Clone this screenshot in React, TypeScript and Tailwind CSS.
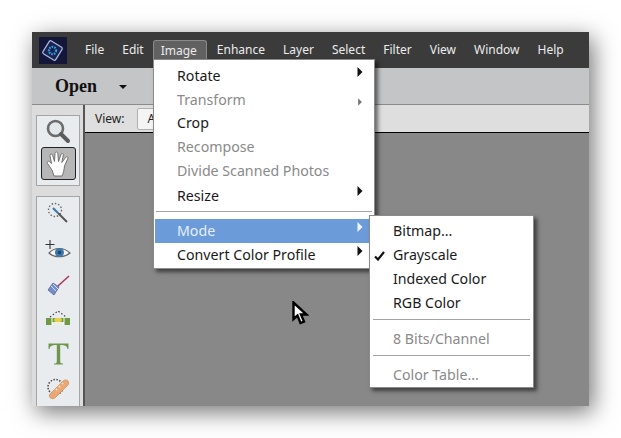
import clsx from "clsx";
import React from "react";

const menuBar = ["File", "Edit", "Image", "Enhance", "Layer", "Select", "Filter", "View", "Window", "Help"];

const Arrow = ({ className }: { className: string }) => (
  <svg width="6" height="10" viewBox="0 0 6 10" className={clsx("absolute", className)}>
    <path d="M0.5 0 L5.5 5 L0.5 10 Z" fill="currentColor" />
  </svg>
);

const MenuRow = ({
  label,
  disabled,
  active,
  arrow,
  small,
  checked,
  className,
}: {
  label: string;
  disabled?: boolean;
  active?: boolean;
  arrow?: boolean;
  small?: boolean;
  checked?: boolean;
  className: string;
}) => (
  <div
    className={clsx(
      "relative flex items-center text-[14.2px] leading-none",
      className,
      active ? "bg-[#6c9bd9] text-[#e6eefa]" : disabled ? "text-[#8a8a8a]" : "text-[#1a1a1a]",
    )}
  >
    {checked && (
      <svg width="11" height="10" viewBox="0 0 11 10" className="absolute left-[4px] top-[8px]">
        <path d="M1 5.5 L4 8.5 L10 1" fill="none" stroke="#111" strokeWidth="2.2" />
      </svg>
    )}
    {label}
    {arrow && (
      <Arrow
        className={clsx(
          "right-[11px]",
          small ? "top-[9px] scale-75 text-[#777]" : "top-[3px] text-[#111]",
          active && "text-[#f2f6fc]",
        )}
      />
    )}
  </div>
);

const Divider = ({ className }: { className: string }) => <div className={clsx("h-px bg-[#a3a3a3]", className)} />;

const Logo = () => (
  <svg width="28" height="27" viewBox="0 0 28 27">
    <rect width="28" height="27" fill="#14173a" />
    <rect x="6" y="6" width="15" height="15" rx="1.5" transform="rotate(32 13.500 13.500)" fill="#1b2350" stroke="#a9bde2" strokeWidth="1.200" />
    <circle cx="13.500" cy="13.500" r="3.600" fill="none" stroke="#2f9fe0" strokeWidth="2.200" strokeDasharray="1.600 1" />
  </svg>
);

const ZoomIcon = () => (
  <svg width="26" height="26" viewBox="0 0 26 26">
    <circle cx="10.500" cy="10.500" r="7.500" fill="#e4e8ea" stroke="#6c6c6c" strokeWidth="2.600" />
    <path d="M16 16 L23 23" stroke="#5c5c5c" strokeWidth="4" strokeLinecap="round" />
  </svg>
);

const HandIcon = () => (
  <svg width="24" height="26" viewBox="0 0 24 26">
    <path
      d="M6 19 L1.500 12.500 C0.500 10.500 2.500 9.500 4 11 L5.500 12.500 L4 4.500 C3.800 2.500 6 2.200 6.500 4 L8.500 10.500 L9 2.500 C9 0.500 11.500 0.500 11.800 2.500 L12.500 10.500 L15 3.500 C15.500 1.800 17.700 2.300 17.300 4 L15.800 11.500 L19.500 6.500 C20.800 5 22.500 6 21.700 7.800 L18.500 15 C18 19 17.500 22 16 25 L8 25 Z"
      fill="#fff"
      stroke="#666"
      strokeWidth="0.900"
      strokeLinejoin="round"
    />
  </svg>
);

const WandIcon = () => (
  <svg width="22" height="22" viewBox="0 0 22 22">
    <circle cx="8" cy="8" r="6.500" fill="none" stroke="#666" strokeWidth="1.400" strokeDasharray="1.500 1.800" />
    <path d="M6 6 L11 11" stroke="#3a77b8" strokeWidth="2.200" />
    <path d="M11 11 L20 20" stroke="#555" strokeWidth="2" />
  </svg>
);

const EyeIcon = () => (
  <svg width="26" height="22" viewBox="0 0 26 22" className="mt-px">
    <path d="M5 1 V10 M0.500 5.500 H9.500" stroke="#333" strokeWidth="1.100" />
    <path d="M4 14 C9 8 19 8 25 14 C19 19 9 19 4 14 Z" fill="#f4f6f8" stroke="#666" strokeWidth="1.200" />
    <circle cx="14.500" cy="13.500" r="4.500" fill="#3f78ad" />
    <circle cx="14.500" cy="13.500" r="1.800" fill="#1e456e" />
  </svg>
);

const BrushIcon = () => (
  <svg width="24" height="24" viewBox="0 0 24 24" className="-mt-px">
    <path d="M12 12 L23 2" stroke="#a83a5a" strokeWidth="1.600" />
    <path d="M7 9 L13 13 L8 21 L2 16 Z" fill="#6f8fd0" stroke="#6a5a88" strokeWidth="0.800" />
    <path d="M5 12 L10 17 M7 10 L12 15" stroke="#d5e0f4" strokeWidth="1" />
  </svg>
);

const LevelIcon = () => (
  <svg width="24" height="16" viewBox="0 0 24 16" className="-mt-[2px]">
    <path d="M4 7 L12 1 L20 7" fill="none" stroke="#333" strokeWidth="1.100" strokeDasharray="1.500 2" />
    <rect x="0" y="8" width="24" height="7" fill="#6f9a43" />
    <rect x="6" y="12" width="12" height="3" fill="#eef0df" />
    <rect x="8" y="8" width="8" height="4" rx="2" fill="#e3d24a" />
    <path d="M6 8 V15 M18 8 V15" stroke="#ffffff" strokeWidth="1" />
  </svg>
);

const TextIcon = () => (
  <svg width="21" height="22" viewBox="0 0 21 22" className="mt-[3px]">
    <path
      d="M0.500 0.500 H20.500 V6 H19.500 C19 3 17.500 2 12.200 2 V18.500 C12.200 20 13 20.500 15 20.500 V21.500 H6 V20.500 C8 20.500 8.800 20 8.800 18.500 V2 C3.500 2 2 3 1.500 6 H0.500 Z"
      fill="#6f9550"
    />
  </svg>
);

const BandageIcon = () => (
  <svg width="24" height="24" viewBox="0 0 24 24" className="-mt-[3px]">
    <circle cx="9.500" cy="11" r="7.500" fill="none" stroke="#4a4a4a" strokeWidth="1.500" strokeDasharray="1.500 1.500" />
    <path d="M4 18 L17 5 C19 3.500 21 3.500 22 5 C23 6.500 23 8 21.500 9.500 L9.500 21.500 C8 23 6 23 4.500 22 C3 21 3 19.500 4 18 Z" fill="#e9a773" stroke="#c9824e" strokeWidth="0.600" />
    <path d="M10 13 L12 15 M13 10 L15 12 M16 7 L18 9" stroke="#fff1e0" strokeWidth="1.400" strokeDasharray="1.400 1.200" />
  </svg>
);

const Cursor = () => (
  <svg width="17" height="25" viewBox="0 0 17 25" className="absolute left-[260px] top-[269px]">
    <path d="M1.500 1.500 L1.500 18 L5.500 14.500 L8.500 22 L12 20.500 L9 13.500 L14.500 13.500 Z" fill="#fff" stroke="#000" strokeWidth="2.400" strokeLinejoin="miter" />
  </svg>
);

export default function App() {
  return (
    <div className="w-[621px] h-[438px] bg-white pt-8 pl-8 font-['Noto_Sans',sans-serif]">
      <div className="relative w-[557px] h-[374px] flex flex-col bg-[#888888] shadow-[4px_6px_22px_rgba(0,0,0,0.55)]">
        <div className="h-[36px] bg-[#3b3b3b] flex items-center pl-[7px]">
          <Logo />
          <div className="flex items-center ml-[10px] gap-[2px] h-[20px]">
            {menuBar.map((m) => (
              <div
                key={m}
                className={clsx(
                  "h-full px-2 flex items-center text-[12px] text-[#ececec]",
                  m === "Image" && "bg-[#616161] rounded-t-[3px] border border-b-0 border-[#8a8a8a] -ml-px pl-[7px] pr-[9px]",
                )}
              >
                {m}
              </div>
            ))}
          </div>
        </div>

        <div className="h-[36px] bg-[#c4c5c6] border-b border-[#8b8b8b] flex items-center pl-[23px] box-content">
          <span className="font-['Liberation_Serif',serif] font-bold text-[18px] text-[#111]">Open</span>
          <span className="ml-[22px] mt-[1px] w-0 h-0 border-x-[4px] border-x-transparent border-t-[4px] border-t-[#111]" />
        </div>

        <div className="flex-1 flex min-h-0">
          <div className="w-[53px] bg-[#dcdcdc] border-r-2 border-[#555] pl-[4px] pr-[3px] pt-[10px] flex flex-col gap-[10px]">
            <div className="h-[71px] bg-[#e8ecee] border border-[#a5a5a5] flex flex-col items-center pt-[2px] gap-[3px]">
              <ZoomIcon />
              <div className="w-[35px] h-[33px] bg-[#b6b6b6] border border-[#222] rounded-[3px] flex items-center justify-center">
                <HandIcon />
              </div>
            </div>
            <div className="flex-1 bg-[#e8ecee] border-x border-t border-[#a5a5a5] flex flex-col items-center pt-[5px] gap-[14px]">
              <WandIcon />
              <EyeIcon />
              <BrushIcon />
              <LevelIcon />
              <TextIcon />
              <BandageIcon />
            </div>
          </div>

          <div className="flex-1 flex flex-col">
            <div className="h-[28px] bg-[#dedede] border-b border-black flex items-center pl-[10px]">
              <span className="text-[12px] text-[#222]">View:</span>
              <div className="ml-[13px] w-[40px] h-[22px] bg-[#f4f4f4] border border-[#b0b0b0] rounded-[2px] pl-[9px] text-[12px] text-[#222] leading-[20px]">
                A
              </div>
            </div>
            <div className="flex-1 bg-[#888888]" />
          </div>
        </div>

        <div className="absolute left-[121px] top-[27px] w-[222px] h-[210px] bg-white border border-[#8b8b8b] shadow-[3px_3px_4px_rgba(0,0,0,0.55)] pt-[4px] flex flex-col">
          <MenuRow label="Rotate" arrow className="h-[24px] pl-[23px]" />
          <MenuRow label="Transform" disabled arrow small className="h-[24px] pl-[23px]" />
          <MenuRow label="Crop" className="h-[23px] pl-[23px] pb-[1px]" />
          <MenuRow label="Recompose" disabled className="h-[24px] pl-[23px]" />
          <MenuRow label="Divide Scanned Photos" disabled className="h-[24px] pl-[23px]" />
          <MenuRow label="Resize" arrow className="h-[25px] pl-[23px] pt-[1px]" />
          <Divider className="mx-[2px] mt-[3px] mb-[7px]" />
          <MenuRow label="Mode" active arrow className="h-[24px] ml-[1px] pl-[22px]" />
          <MenuRow label="Convert Color Profile" arrow className="h-[24px] pl-[23px]" />
        </div>

        <div className="absolute left-[337px] top-[183px] w-[165px] h-[173px] bg-white border border-[#8b8b8b] shadow-[3px_3px_4px_rgba(0,0,0,0.55)] pt-[3px] flex flex-col">
          <MenuRow label="Bitmap..." className="h-[24px] pl-[23px]" />
          <MenuRow label="Grayscale" checked className="h-[24px] pl-[23px]" />
          <MenuRow label="Indexed Color" className="h-[24px] pl-[23px]" />
          <MenuRow label="RGB Color" className="h-[24px] pl-[23px]" />
          <Divider className="mx-[3px] mt-[4px] mb-[7px]" />
          <MenuRow label="8 Bits/Channel" disabled className="h-[24px] pl-[23px]" />
          <Divider className="mx-[3px] mt-[4px] mb-[7px]" />
          <MenuRow label="Color Table..." disabled className="h-[24px] pl-[23px]" />
        </div>

        <Cursor />
      </div>
    </div>
  );
}
